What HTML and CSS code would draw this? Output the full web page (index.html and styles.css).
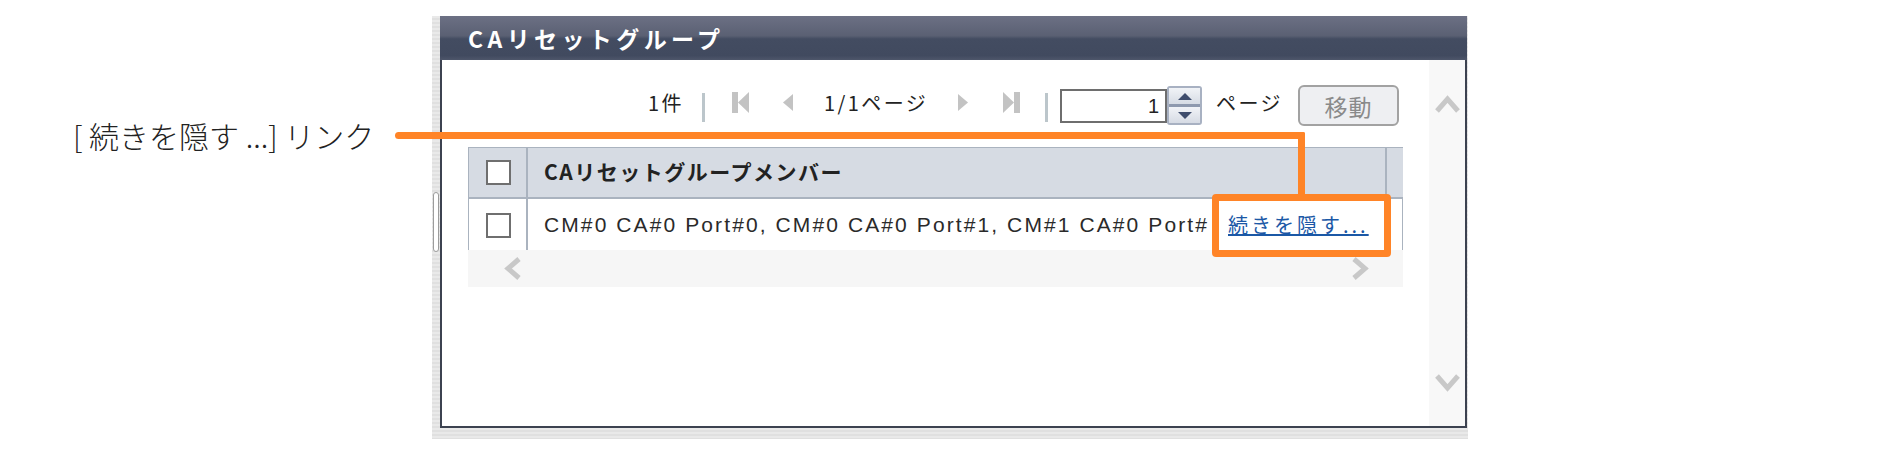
FILE: index.html
```html
<!DOCTYPE html>
<html lang="ja">
<head>
  <meta charset="utf-8">
  <title>CAリセットグループ</title>
  <link rel="stylesheet" href="styles.css">
</head>
<body>

<div class="stage">
  <div class="frame">
    <div class="grip-col"><div class="grip"></div></div>
    <div class="panel">
      <div class="panel-title">CAリセットグループ</div>
      <div class="panel-body">
        <div class="content">
          <div class="pager">
            <span class="count">1件</span>
            <span class="sep"></span>
            <svg class="nav first" width="17" height="21" viewBox="0 0 17 21"><rect x="0" y="0" width="6" height="21" fill="#c3c3c3"/><polygon points="17,0 6,10.5 17,21" fill="#c3c3c3"/></svg>
            <svg class="nav prev" width="10" height="17" viewBox="0 0 10 17"><polygon points="10,0 0,8.5 10,17" fill="#c3c3c3"/></svg>
            <span class="pages">1/1ページ</span>
            <svg class="nav next" width="10" height="17" viewBox="0 0 10 17"><polygon points="0,0 10,8.5 0,17" fill="#c3c3c3"/></svg>
            <svg class="nav last" width="17" height="21" viewBox="0 0 17 21"><polygon points="0,0 11,10.5 0,21" fill="#c3c3c3"/><rect x="11" y="0" width="6" height="21" fill="#c3c3c3"/></svg>
            <span class="sep sep-right"></span>
            <span class="page-input">1</span>
            <span class="spin">
              <span class="spin-btn"><svg width="14" height="7" viewBox="0 0 14 7"><polygon points="0,7 7,0 14,7" fill="#3e4c6c"/></svg></span>
              <span class="spin-btn"><svg width="14" height="7" viewBox="0 0 14 7"><polygon points="0,0 14,0 7,7" fill="#3e4c6c"/></svg></span>
            </span>
            <span class="unit">ページ</span>
            <button class="go" disabled>移動</button>
          </div>

          <div class="grid">
            <div class="thead">
              <div class="col-check"><span class="box"></span></div>
              <div class="col-name">CAリセットグループメンバー</div>
              <div class="col-end"></div>
            </div>
            <div class="row">
              <div class="col-check"><span class="box"></span></div>
              <div class="col-name">
                <span class="members">CM#0 CA#0 Port#0, CM#0 CA#0 Port#1, CM#1 CA#0 Port#</span>
                <a class="more" href="#">続きを隠す...</a>
              </div>
            </div>
            <div class="hscroll">
              <svg width="19" height="23" viewBox="0 0 19 23"><polyline points="16,2 5,11.5 16,21" fill="none" stroke="#c8c8c8" stroke-width="5"/></svg>
              <svg width="19" height="23" viewBox="0 0 19 23"><polyline points="3,2 14,11.5 3,21" fill="none" stroke="#c8c8c8" stroke-width="5"/></svg>
            </div>
          </div>
        </div>
        <div class="vscroll">
          <svg width="25" height="18" viewBox="0 0 25 18"><polyline points="2,16 12.5,4 23,16" fill="none" stroke="#c8c8c8" stroke-width="5"/></svg>
          <svg width="25" height="18" viewBox="0 0 25 18"><polyline points="2,2 12.5,14 23,2" fill="none" stroke="#c8c8c8" stroke-width="5"/></svg>
        </div>
      </div>
    </div>
  </div>

  <!-- callout -->
  <div class="label">[ 続きを隠す ...] リンク</div>
  <div class="callout-line"></div>
  <div class="callout-drop"></div>
  <div class="callout-box"></div>
</div>

</body>
</html>
```

FILE: styles.css
```css
body {
  margin: 0;
  font-family: "Liberation Sans", "Noto Sans CJK JP", sans-serif;
  background: #fff;
  color: #333;
}
.stage {
  position: relative;
  width: 1890px;
  height: 449px;
  padding-top: 16px;
  box-sizing: border-box;
}
.frame {
  display: grid;
  grid-template-columns: 8px 1027px;
  width: 1036px;
  margin-left: 432px;
  padding-bottom: 11px;
  background: repeating-linear-gradient(#e9e9e9 0 2px, #e0e0e0 2px 4px);
}
.grip-col {
  padding-top: 176px;
}
.grip {
  width: 4px;
  height: 58px;
  margin-left: 1px;
  border: 1px solid #9c9c9c;
  border-radius: 3px;
  background: #fff;
}
.panel {
  border: 2px solid #3c4250;
  border-top: none;
  background: #fff;
  height: 410px;
}
.panel-title {
  height: 44px;
  margin: 0 -2px;
  padding-left: 28px;
  background: linear-gradient(#6c7084, #5a6073 45%, #434c61 52%, #414a5f 90%, #4e566a);
  color: #fff;
  font-family: "Noto Sans CJK JP", sans-serif;
  font-weight: bold;
  font-size: 23px;
  letter-spacing: 4.4px;
  line-height: 44px;
}
.panel-body {
  display: flex;
  height: 366px;
}
.content {
  flex: 1;
  padding: 25px 26px 0 26px;
}
.vscroll {
  width: 36px;
  background: #f8f8f8;
  display: flex;
  flex-direction: column;
  align-items: center;
  justify-content: space-between;
  padding: 35px 0 34px;
  box-sizing: border-box;
}

/* pager */
.pager {
  display: flex;
  align-items: center;
  height: 41px;
  padding-left: 180px;
  font-size: 20px;
  color: #222;
  white-space: nowrap;
}
.count,
.pages,
.unit {
  font-family: "Noto Sans CJK JP", sans-serif;
  letter-spacing: 2.4px;
  margin-bottom: 6px;
}
.nav {
  margin-bottom: 6px;
}
.count {
  width: 40px;
}
.sep {
  width: 3px;
  height: 29px;
  background: #bcc6cb;
  margin-left: 14px;
  margin-top: 4px;
}
.nav.first {
  margin-left: 27px;
}
.nav.prev {
  margin-left: 34px;
}
.pages {
  width: 104px;
  margin-left: 31px;
}
.nav.next {
  margin-left: 30px;
}
.nav.last {
  margin-left: 35px;
}
.sep-right {
  margin-left: 25px;
}
.page-input {
  margin-left: 12px;
  width: 107px;
  height: 34px;
  box-sizing: border-box;
  border: 2px solid #6e6e6e;
  text-align: right;
  padding-right: 6px;
  line-height: 30px;
  font-size: 20px;
}
.spin {
  display: flex;
  flex-direction: column;
  width: 35px;
  height: 39px;
  box-sizing: border-box;
  border: 2px solid #a8b1c2;
  border-radius: 3px;
  background: #8e99ae;
  gap: 3px;
}
.spin-btn {
  flex: 1;
  display: flex;
  align-items: center;
  justify-content: center;
  background: linear-gradient(#f1f3f7, #d6dbe4);
}
.unit {
  width: 68px;
  margin-left: 14px;
}
.go {
  margin-left: 14px;
  width: 101px;
  height: 41px;
  border: 2px solid #a2a2a2;
  border-radius: 6px;
  background: #eeeff2;
  color: #8a8a8a;
  font-family: "Noto Sans CJK JP", sans-serif;
  font-size: 23px;
  letter-spacing: 1px;
  padding: 0;
}

/* grid */
.grid {
  margin-top: 21px;
  width: 935px;
}
.thead {
  display: flex;
  height: 52px;
  box-sizing: border-box;
  border-top: 1px solid #aab3bf;
  border-bottom: 2px solid #aab3bf;
  border-left: 1px solid #aab3bf;
  background: #d6dbe3;
}
.col-check {
  width: 59px;
  border-right: 2px solid #aab3bf;
  display: flex;
  align-items: center;
  padding-left: 17px;
  box-sizing: border-box;
  flex: none;
}
.box {
  width: 25px;
  height: 25px;
  box-sizing: border-box;
  border: 2px solid #6f6f6f;
  background: #fff;
}
.thead .col-name {
  flex: 1;
  padding-left: 16px;
  font-family: "Noto Sans CJK JP", sans-serif;
  font-weight: bold;
  font-size: 21px;
  letter-spacing: 1.5px;
  color: #222;
  line-height: 47px;
}
.col-end {
  width: 16px;
  border-left: 2px solid #aab3bf;
}
.row {
  display: flex;
  height: 51px;
  box-sizing: border-box;
  border-left: 1px solid #aab3bf;
  border-right: 1px solid #aab3bf;
  background: #fff;
}
.row .col-check {
  padding-top: 1px;
}
.row .col-name {
  flex: 1;
  display: flex;
  align-items: center;
  padding-left: 16px;
  font-size: 21px;
  color: #2a2a2a;
}
.members {
  white-space: nowrap;
  letter-spacing: 2.1px;
  width: 669px;
  flex: none;
}
.more {
  margin-left: 15px;
  color: #1b58a6;
  font-family: "Noto Sans CJK JP", sans-serif;
  font-size: 20px;
  letter-spacing: 3px;
  text-decoration: underline;
  white-space: nowrap;
}
.hscroll {
  height: 37px;
  background: #f6f6f6;
  display: flex;
  align-items: center;
  justify-content: space-between;
  padding: 0 33px 0 35px;
}

/* callout */
.label {
  position: absolute;
  left: 73px;
  top: 114px;
  font-family: "Noto Sans CJK JP", sans-serif;
  font-weight: 300;
  font-size: 30px;
  color: #222;
  line-height: 42px;
  white-space: nowrap;
}
.callout-line {
  position: absolute;
  left: 395px;
  top: 132px;
  width: 910px;
  height: 7px;
  background: #ff8427;
  border-radius: 4px 2px 0 4px;
}
.callout-drop {
  position: absolute;
  left: 1298px;
  top: 132px;
  width: 7px;
  height: 64px;
  background: #ff8427;
  border-radius: 0 2px 0 0;
}
.callout-box {
  position: absolute;
  left: 1212px;
  top: 194px;
  width: 179px;
  height: 63px;
  box-sizing: border-box;
  border: 7px solid #ff8427;
  border-radius: 4px;
}
```
